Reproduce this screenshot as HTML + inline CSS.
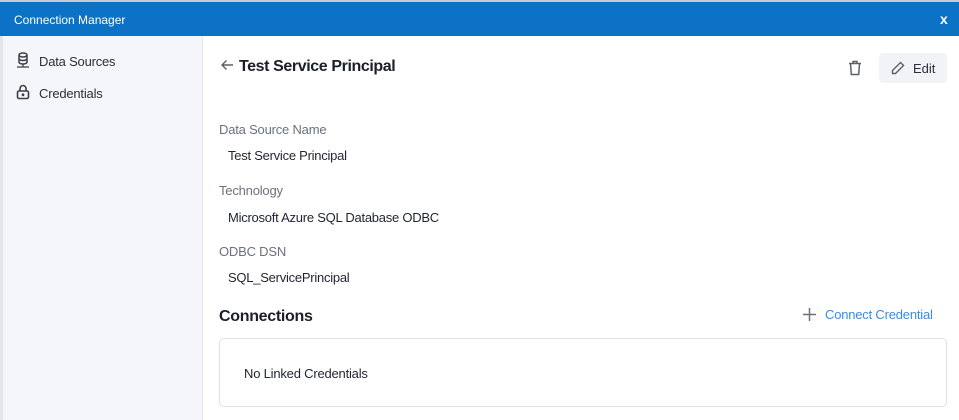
<!DOCTYPE html>
<html><head><meta charset="utf-8"><style>
*{margin:0;padding:0;box-sizing:border-box}
body{width:959px;height:420px;overflow:hidden;background:#fff;font-family:"Liberation Sans",sans-serif;position:relative}
.top{position:absolute;left:0;top:0;width:959px;height:2px;background:#c8cbd0}
.bar{position:absolute;left:0;top:2px;width:959px;height:34px;background:#0b72c6;color:#fff;font-size:12px}
.bar .t{position:absolute;left:14px;top:11px}
.bar .x{position:absolute;left:940px;top:9px;font-weight:bold;font-size:14px}
.side{position:absolute;left:0;top:36px;width:203px;height:384px;background:#f5f6fa;border-left:3px solid #e3e5ea;border-right:1px solid #e6e8ee}
.nav{position:absolute;left:39px;font-size:13px;color:#2b2f3a;letter-spacing:-0.2px}
.abs{position:absolute}
.lbl{position:absolute;left:219px;font-size:13px;color:#6b717d;letter-spacing:-0.2px}
.val{position:absolute;left:228px;font-size:13px;color:#1f2430;letter-spacing:-0.25px}
</style></head><body>
<div class="top"></div>
<div class="bar"><span class="t">Connection Manager</span><span class="x">x</span></div>
<div class="side">
<svg class="abs" style="left:13px;top:16px" width="14" height="18" viewBox="0 0 14 18" fill="none" stroke="#3a3f4b" stroke-width="1.5"><ellipse cx="7" cy="3" rx="4" ry="2"/><path d="M3 3v7c0 1.2 1.8 2 4 2s4-.8 4-2V3M3 6.5c0 1.2 1.8 2 4 2s4-.8 4-2"/><path d="M7 12v3M1 15h12" stroke-width="1.2"/></svg>
<div class="nav" style="top:18px;left:36px">Data Sources</div>
<svg class="abs" style="left:13px;top:48px" width="14" height="16" viewBox="0 0 14 16" fill="none" stroke="#3a3f4b" stroke-width="1.6"><rect x="1.5" y="7" width="11" height="7.5" rx="1.5"/><path d="M4 7V4.5a3 3 0 0 1 6 0V7"/><circle cx="7" cy="10.8" r=".6" fill="#3a3f4b"/></svg>
<div class="nav" style="top:50px;left:36px">Credentials</div>
</div>
<svg class="abs" style="left:220px;top:59px" width="14" height="12" viewBox="0 0 14 12" fill="none" stroke="#5a606c" stroke-width="1.4"><path d="M13 6H2M6.5 1.5L2 6l4.5 4.5"/></svg>
<div class="abs" style="left:239px;top:58px;font-size:16px;font-weight:bold;color:#1b1f29;letter-spacing:-0.4px">Test Service Principal</div>
<svg class="abs" style="left:848px;top:60px" width="14" height="16" viewBox="0 0 14 16" fill="none" stroke="#5a606c" stroke-width="1.5"><path d="M1 3.5h12M5 3.5V1.5h4v2M2.5 3.5l.8 11h7.4l.8-11"/></svg>
<div class="abs" style="left:879px;top:53px;width:68px;height:30px;background:#f2f3f7;border-radius:4px"></div>
<svg class="abs" style="left:891px;top:61px" width="14" height="14" viewBox="0 0 14 14" fill="none" stroke="#5a606c" stroke-width="1.4"><path d="M9.5 1.5l3 3-8 8H1.5v-3z"/></svg>
<div class="abs" style="left:913px;top:61px;font-size:13px;color:#2b2f3a">Edit</div>
<div class="lbl" style="top:122px">Data Source Name</div>
<div class="val" style="top:148px">Test Service Principal</div>
<div class="lbl" style="top:183px">Technology</div>
<div class="val" style="top:210px">Microsoft Azure SQL Database ODBC</div>
<div class="lbl" style="top:244px">ODBC DSN</div>
<div class="val" style="top:270px">SQL_ServicePrincipal</div>
<div class="abs" style="left:219px;top:308px;font-size:16px;font-weight:bold;color:#1b1f29;letter-spacing:-0.3px">Connections</div>
<svg class="abs" style="left:803px;top:308px" width="13" height="13" viewBox="0 0 13 13" stroke="#6b717d" stroke-width="1.5"><path d="M6.5 0v13M0 6.5h13"/></svg>
<div class="abs" style="left:825px;top:307px;font-size:13px;color:#3b8be0;letter-spacing:-0.2px">Connect Credential</div>
<div class="abs" style="left:219px;top:338px;width:728px;height:69px;border:1px solid #dde1ea;border-radius:5px"></div>
<div class="abs" style="left:244px;top:366px;font-size:13px;color:#1f2430;letter-spacing:-0.2px">No Linked Credentials</div>
</body></html>
